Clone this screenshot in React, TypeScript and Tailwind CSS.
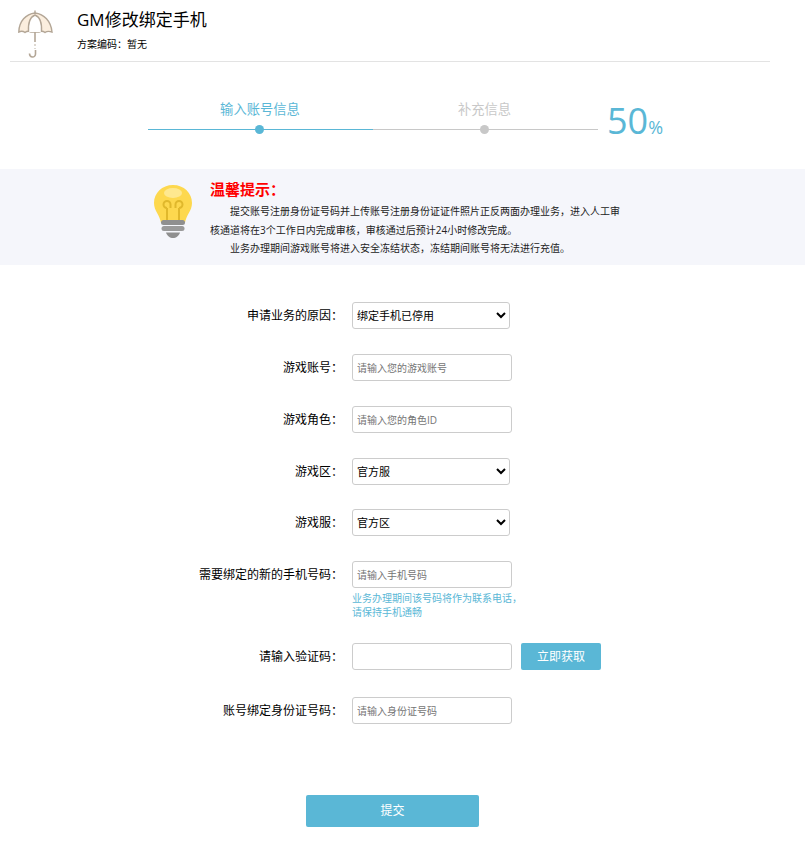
const font = '[font-family:"Open_Sans","Noto_Sans_CJK_SC",sans-serif]';

function Umbrella() {
  return (
    <svg width="36" height="48" viewBox="0 0 36 48" className="shrink-0">
      <path d="M17 3 C8 4 1 11 0.8 22 C3 21 5 21 7 22.500 C9 21 11 21 13 22 L21 22 C23 21 25 21 27 22.500 C29 21 31 21 34 22 C33 11 26 4 17 3 Z" fill="#fbeede" stroke="#b3a696" strokeWidth="1.4" />
      <path d="M10.500 22 C10 14 12 7 17 5 C22 7 24 14 23.500 22" fill="#ffffff" stroke="#b3a696" strokeWidth="1.4" />
      <path d="M17 3 V0.500" stroke="#b3a696" strokeWidth="1.4" fill="none" />
      <path d="M17 22 V32" stroke="#b3a696" strokeWidth="1.6" fill="none" />
      <path d="M17 34 V36 M17 38 V39" stroke="#d5cfc6" strokeWidth="1.6" fill="none" />
      <path d="M17.500 40 V44 C17.500 48 11.500 48 11.500 43.500" stroke="#b3a696" strokeWidth="1.6" fill="none" />
    </svg>
  );
}

function Bulb() {
  return (
    <svg width="40" height="56" viewBox="0 0 40 56" className="shrink-0">
      <path d="M20 1 C9 1 1 9 1 19 C1 27 7 31 8 39 L32 39 C33 31 39 27 39 19 C39 9 31 1 20 1 Z" fill="#fdd84e" />
      <ellipse cx="20" cy="9" rx="9" ry="5" fill="#fee88f" />
      <path d="M14 38 V24 M26 38 V24 M14 24 A3.500 3.500 0 1 1 17.500 20.500 V24 M26 24 A3.500 3.500 0 1 0 22.500 20.500 V24" fill="none" stroke="#e0b82c" strokeWidth="2" />
      <rect x="8" y="36" width="24" height="5" rx="2.500" fill="#8f8f8f" />
      <rect x="8.500" y="42" width="23" height="5" rx="2.500" fill="#9a9a9a" />
      <path d="M13 48.500 H27 C26 52 23 54 20 54 C17 54 14 52 13 48.500 Z" fill="#8f8f8f" />
    </svg>
  );
}

function Row({ label, children }: { label: string; children: React.ReactNode }) {
  return (
    <div className="flex items-start">
      <label className="w-[343px] shrink-0 text-right text-xs leading-[27px] text-black">{label}</label>
      <div className="ml-[9px]">{children}</div>
    </div>
  );
}

function TextInput({ placeholder }: { placeholder?: string }) {
  return (
    <input
      placeholder={placeholder}
      className="block w-[160px] h-[27px] px-[4px] border border-[#cccccc] rounded-[3px] text-[10px] bg-white outline-none placeholder:text-[#757575]"
    />
  );
}

function Select({ value }: { value: string }) {
  return (
    <select
      defaultValue={value}
      className="block w-[158px] h-[27px] border border-[#cccccc] rounded-[3px] text-[11px] bg-white text-black outline-none"
    >
      <option>{value}</option>
    </select>
  );
}

export default function App() {
  return (
    <div className={`w-[805px] h-[868px] bg-white overflow-hidden ${font}`}>
      <div className="ml-[10px] w-[760px] h-[62px] border-b border-[#e3e3e3] flex pl-[8px] pt-[10px]">
        <Umbrella />
        <div className="ml-[23px] -mt-[1px]">
          <h1 className="text-[17px] leading-[22px] text-black">GM修改绑定手机</h1>
          <p className="mt-[6px] text-[10px] leading-[14px] text-black">方案编码：暂无</p>
        </div>
      </div>

      <div className="relative flex h-[107px] pl-[148px] pt-[37px]">
        <div className="w-[225px]">
          <div className="w-[224px] text-center text-[13.300px] leading-[20px] text-[#5ab7d6]">输入账号信息</div>
          <div className="relative mt-[10px] h-px bg-[#5ab7d6]">
            <span className="absolute left-[107px] -top-[4px] w-[9px] h-[9px] rounded-full bg-[#5ab7d6]" />
          </div>
        </div>
        <div className="w-[225px]">
          <div className="w-[223px] text-center text-[13.300px] leading-[20px] text-[#c8c8c8]">补充信息</div>
          <div className="relative mt-[10px] h-px bg-[#c8c8c8]">
            <span className="absolute left-[107px] -top-[4px] w-[9px] h-[9px] rounded-full bg-[#c8c8c8]" />
          </div>
        </div>
        <div className="ml-[9px] mt-[2px] text-[36px] leading-[40px] text-[#5ab7d6]">
          50<span className="text-[18px]">%</span>
        </div>
      </div>

      <div className="h-[96px] bg-[#f5f6fb] flex pl-[153px] pt-[15px]">
        <Bulb />
        <div className="ml-[17px] w-[412px]">
          <h2 className="text-[15px] leading-[10px] font-bold text-[#ff0000]">温馨提示：</h2>
          <p className="mt-[8px] text-[10px] leading-[18.500px] text-[#222222] indent-[20px]">
            提交账号注册身份证号码并上传账号注册身份证证件照片正反两面办理业务，进入人工审核通道将在3个工作日内完成审核，审核通过后预计24小时修改完成。
          </p>
          <p className="text-[10px] leading-[18.500px] text-[#222222] indent-[20px]">
            业务办理期间游戏账号将进入安全冻结状态，冻结期间账号将无法进行充值。
          </p>
        </div>
      </div>

      <div className="flex flex-col pt-[37px]">
        <Row label="申请业务的原因：">
          <Select value="绑定手机已停用" />
        </Row>
        <div className="mt-[25px]">
          <Row label="游戏账号：">
            <TextInput placeholder="请输入您的游戏账号" />
          </Row>
        </div>
        <div className="mt-[25px]">
          <Row label="游戏角色：">
            <TextInput placeholder="请输入您的角色ID" />
          </Row>
        </div>
        <div className="mt-[25px]">
          <Row label="游戏区：">
            <Select value="官方服" />
          </Row>
        </div>
        <div className="mt-[24px]">
          <Row label="游戏服：">
            <Select value="官方区" />
          </Row>
        </div>
        <div className="mt-[25px]">
          <Row label="需要绑定的新的手机号码：">
            <TextInput placeholder="请输入手机号码" />
            <p className="mt-[3px] w-[170px] text-[10px] leading-[14px] text-[#5ab7d6]">
              业务办理期间该号码将作为联系电话，请保持手机通畅
            </p>
          </Row>
        </div>
        <div className="mt-[24px]">
          <Row label="请输入验证码：">
            <div className="flex">
              <TextInput />
              <button className="ml-[9px] w-[80px] h-[27px] rounded-[2px] bg-[#5ab7d6] text-xs text-white">立即获取</button>
            </div>
          </Row>
        </div>
        <div className="mt-[27px]">
          <Row label="账号绑定身份证号码：">
            <TextInput placeholder="请输入身份证号码" />
          </Row>
        </div>
        <button className="mt-[71px] ml-[306px] w-[173px] h-[32px] rounded-[2px] bg-[#5ab7d6] text-xs text-white">提交</button>
      </div>
    </div>
  );
}
